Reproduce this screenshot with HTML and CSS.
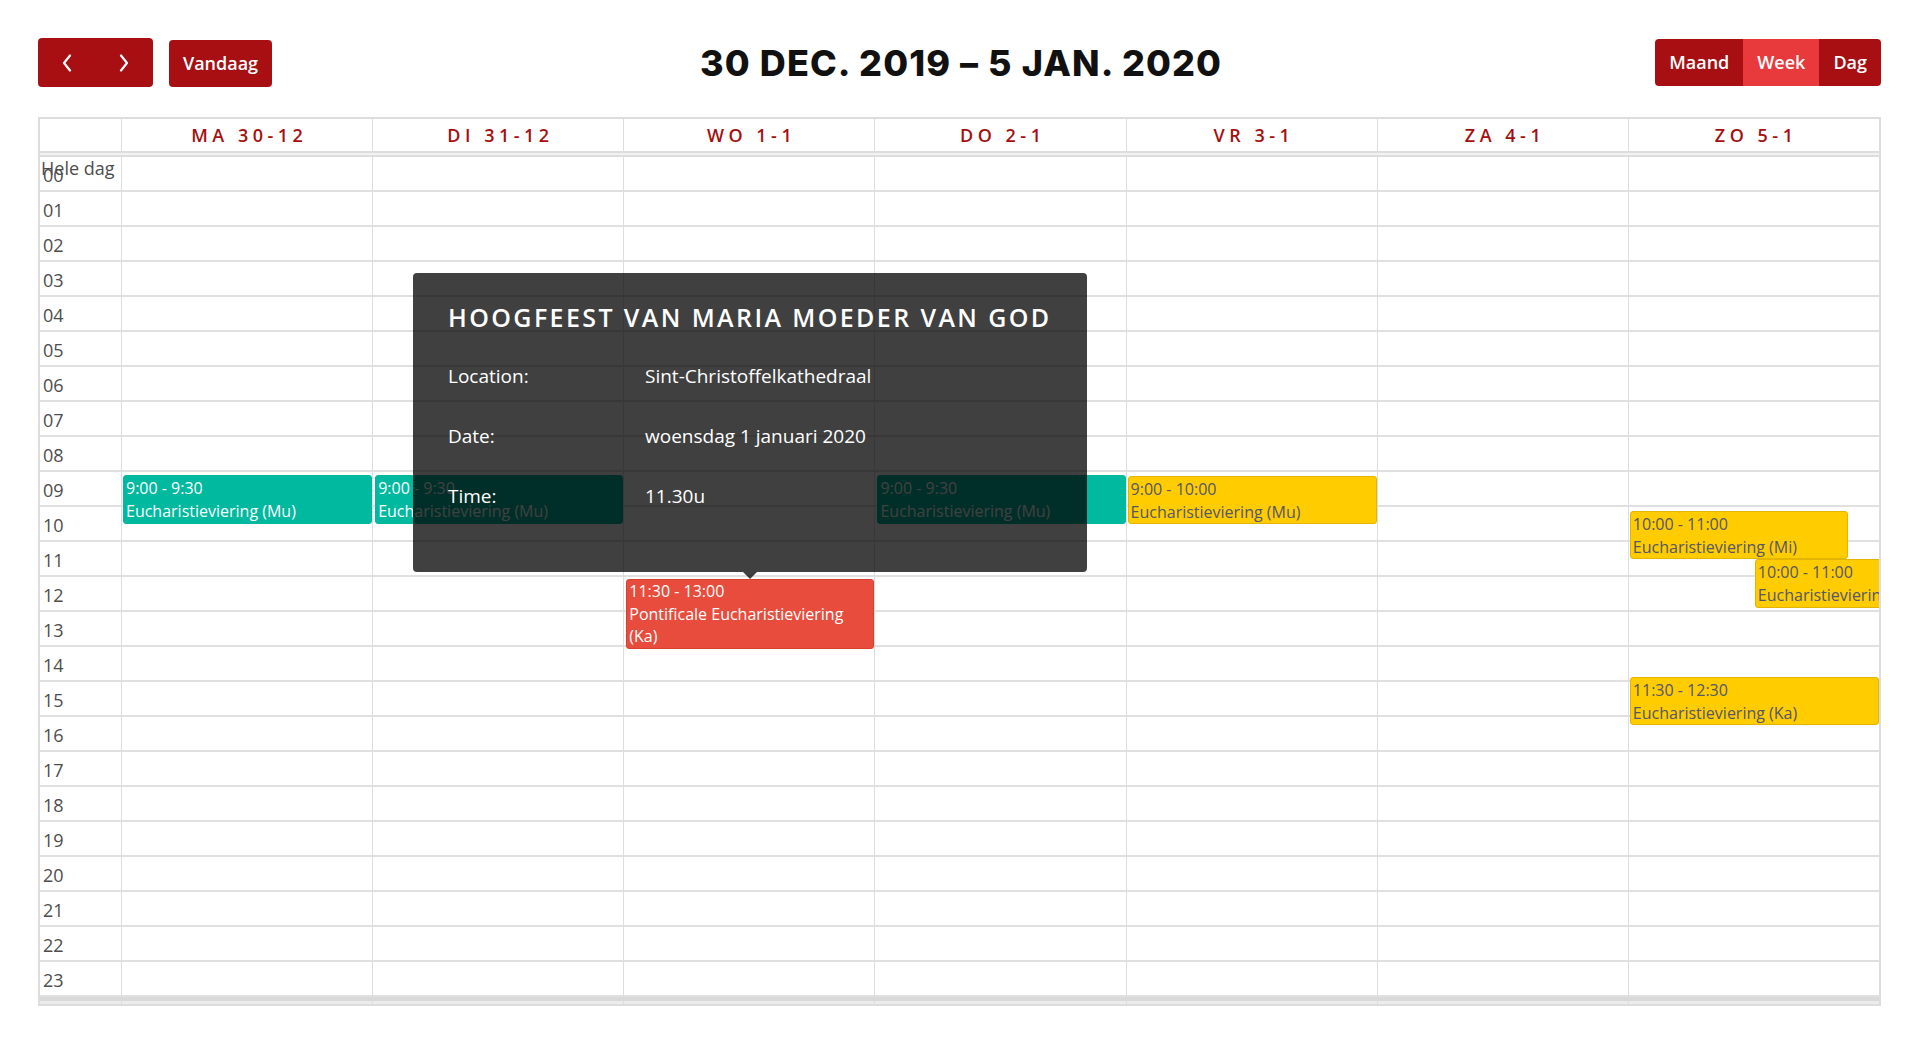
FILE: index.html
```html
<!DOCTYPE html>
<html lang="nl">
<head>
<meta charset="utf-8">
<title>Kalender</title>
<link rel="stylesheet" href="styles.css">
</head>
<body>
<div class="page">
  <header class="toolbar">
    <div class="tb-left">
      <div class="btn-group nav">
        <button class="btn icon-btn" aria-label="Vorige"><svg width="12" height="18" viewBox="0 0 12 18"><polyline points="9,1.5 3,9 9,16.5" fill="none" stroke="#fff" stroke-width="2.2" stroke-linecap="round" stroke-linejoin="round"/></svg></button>
        <button class="btn icon-btn" aria-label="Volgende"><svg width="12" height="18" viewBox="0 0 12 18"><polyline points="3,1.5 9,9 3,16.5" fill="none" stroke="#fff" stroke-width="2.2" stroke-linecap="round" stroke-linejoin="round"/></svg></button>
      </div>
      <button class="btn today">Vandaag</button>
    </div>
    <h2 class="title">30 DEC. 2019 – 5 JAN. 2020</h2>
    <div class="btn-group views">
      <button class="btn">Maand</button><button class="btn active">Week</button><button class="btn">Dag</button>
    </div>
  </header>

  <div class="calendar">
    <div class="cal-head">
      <div class="head-cell corner"></div>
      <div class="head-cell">MA 30-12</div>
      <div class="head-cell">DI 31-12</div>
      <div class="head-cell">WO 1-1</div>
      <div class="head-cell">DO 2-1</div>
      <div class="head-cell">VR 3-1</div>
      <div class="head-cell">ZA 4-1</div>
      <div class="head-cell">ZO 5-1</div>
    </div>
    <div class="cal-divider"></div>
    <div class="cal-body">
      <div class="allday-label">Hele dag</div>
      <div class="time-col">
        <div class="slot">00</div><div class="slot">01</div><div class="slot">02</div><div class="slot">03</div>
        <div class="slot">04</div><div class="slot">05</div><div class="slot">06</div><div class="slot">07</div>
        <div class="slot">08</div><div class="slot">09</div><div class="slot">10</div><div class="slot">11</div>
        <div class="slot">12</div><div class="slot">13</div><div class="slot">14</div><div class="slot">15</div>
        <div class="slot">16</div><div class="slot">17</div><div class="slot">18</div><div class="slot">19</div>
        <div class="slot">20</div><div class="slot">21</div><div class="slot">22</div><div class="slot">23</div>
      </div>
      <div class="day-col">
        <div class="slots"><div class="slot"></div><div class="slot"></div><div class="slot"></div><div class="slot"></div><div class="slot"></div><div class="slot"></div><div class="slot"></div><div class="slot"></div><div class="slot"></div><div class="slot"></div><div class="slot"></div><div class="slot"></div><div class="slot"></div><div class="slot"></div><div class="slot"></div><div class="slot"></div><div class="slot"></div><div class="slot"></div><div class="slot"></div><div class="slot"></div><div class="slot"></div><div class="slot"></div><div class="slot"></div><div class="slot"></div></div>
        <div class="event teal ev-full-l1" style="top:318px;height:49px"><div>9:00 - 9:30</div><div>Eucharistieviering (Mu)</div></div>
      </div>
      <div class="day-col">
        <div class="slots"><div class="slot"></div><div class="slot"></div><div class="slot"></div><div class="slot"></div><div class="slot"></div><div class="slot"></div><div class="slot"></div><div class="slot"></div><div class="slot"></div><div class="slot"></div><div class="slot"></div><div class="slot"></div><div class="slot"></div><div class="slot"></div><div class="slot"></div><div class="slot"></div><div class="slot"></div><div class="slot"></div><div class="slot"></div><div class="slot"></div><div class="slot"></div><div class="slot"></div><div class="slot"></div><div class="slot"></div></div>
        <div class="event teal ev-full" style="top:318px;height:49px"><div>9:00 - 9:30</div><div>Eucharistieviering (Mu)</div></div>
      </div>
      <div class="day-col">
        <div class="slots"><div class="slot"></div><div class="slot"></div><div class="slot"></div><div class="slot"></div><div class="slot"></div><div class="slot"></div><div class="slot"></div><div class="slot"></div><div class="slot"></div><div class="slot"></div><div class="slot"></div><div class="slot"></div><div class="slot"></div><div class="slot"></div><div class="slot"></div><div class="slot"></div><div class="slot"></div><div class="slot"></div><div class="slot"></div><div class="slot"></div><div class="slot"></div><div class="slot"></div><div class="slot"></div><div class="slot"></div></div>
        <div class="event red ev-full" style="top:422px;height:70px"><div>11:30 - 13:00</div><div>Pontificale Eucharistieviering (Ka)</div></div>
      </div>
      <div class="day-col">
        <div class="slots"><div class="slot"></div><div class="slot"></div><div class="slot"></div><div class="slot"></div><div class="slot"></div><div class="slot"></div><div class="slot"></div><div class="slot"></div><div class="slot"></div><div class="slot"></div><div class="slot"></div><div class="slot"></div><div class="slot"></div><div class="slot"></div><div class="slot"></div><div class="slot"></div><div class="slot"></div><div class="slot"></div><div class="slot"></div><div class="slot"></div><div class="slot"></div><div class="slot"></div><div class="slot"></div><div class="slot"></div></div>
        <div class="event teal ev-full" style="top:318px;height:49px"><div>9:00 - 9:30</div><div>Eucharistieviering (Mu)</div></div>
      </div>
      <div class="day-col">
        <div class="slots"><div class="slot"></div><div class="slot"></div><div class="slot"></div><div class="slot"></div><div class="slot"></div><div class="slot"></div><div class="slot"></div><div class="slot"></div><div class="slot"></div><div class="slot"></div><div class="slot"></div><div class="slot"></div><div class="slot"></div><div class="slot"></div><div class="slot"></div><div class="slot"></div><div class="slot"></div><div class="slot"></div><div class="slot"></div><div class="slot"></div><div class="slot"></div><div class="slot"></div><div class="slot"></div><div class="slot"></div></div>
        <div class="event yellow ev-full-l1" style="top:319px;height:48px"><div>9:00 - 10:00</div><div>Eucharistieviering (Mu)</div></div>
      </div>
      <div class="day-col">
        <div class="slots"><div class="slot"></div><div class="slot"></div><div class="slot"></div><div class="slot"></div><div class="slot"></div><div class="slot"></div><div class="slot"></div><div class="slot"></div><div class="slot"></div><div class="slot"></div><div class="slot"></div><div class="slot"></div><div class="slot"></div><div class="slot"></div><div class="slot"></div><div class="slot"></div><div class="slot"></div><div class="slot"></div><div class="slot"></div><div class="slot"></div><div class="slot"></div><div class="slot"></div><div class="slot"></div><div class="slot"></div></div>
      </div>
      <div class="day-col">
        <div class="slots"><div class="slot"></div><div class="slot"></div><div class="slot"></div><div class="slot"></div><div class="slot"></div><div class="slot"></div><div class="slot"></div><div class="slot"></div><div class="slot"></div><div class="slot"></div><div class="slot"></div><div class="slot"></div><div class="slot"></div><div class="slot"></div><div class="slot"></div><div class="slot"></div><div class="slot"></div><div class="slot"></div><div class="slot"></div><div class="slot"></div><div class="slot"></div><div class="slot"></div><div class="slot"></div><div class="slot"></div></div>
        <div class="event yellow ev-first" style="top:354px;height:48px"><div>10:00 - 11:00</div><div>Eucharistieviering (Mi)</div></div>
        <div class="event yellow ev-second" style="top:402px;height:49px"><div>10:00 - 11:00</div><div>Eucharistieviering (Mu)</div></div>
        <div class="event yellow ev-full-l1" style="top:520px;height:48px"><div>11:30 - 12:30</div><div>Eucharistieviering (Ka)</div></div>
      </div>
    </div>
    <div class="cal-foot">
      <div class="foot-cell"></div><div class="foot-cell"></div><div class="foot-cell"></div><div class="foot-cell"></div><div class="foot-cell"></div><div class="foot-cell"></div><div class="foot-cell"></div><div class="foot-cell"></div>
    </div>
  </div>

  <div class="tooltip">
    <h3 class="tip-title">HOOGFEEST VAN MARIA MOEDER VAN GOD</h3>
    <div class="tip-rows">
      <div class="tip-row"><span>Location:</span><span>Sint-Christoffelkathedraal</span></div>
      <div class="tip-row"><span>Date:</span><span>woensdag 1 januari 2020</span></div>
      <div class="tip-row"><span>Time:</span><span>11.30u</span></div>
    </div>
  </div>
</div>
</body>
</html>
```

FILE: styles.css
```css
* { box-sizing: border-box; }

body {
  margin: 0;
  background: #fff;
  color: #333;
  font-family: "Open Sans", "Liberation Sans", sans-serif;
}

.page {
  position: relative;
  padding: 38px 39px 0 38px;
}

/* ---------- toolbar ---------- */
.toolbar {
  display: flex;
  align-items: center;
  height: 49px;
  margin-bottom: 30px;
}

.tb-left {
  display: flex;
  align-items: center;
  gap: 16px;
}

.btn {
  border: 0;
  margin: 0;
  height: 47px;
  padding: 0 14px;
  border-radius: 4px;
  background: #a70f12;
  color: #fff;
  font-family: "Open Sans", "Liberation Sans", sans-serif;
  font-size: 18px;
  font-weight: 600;
  line-height: 47px;
  cursor: pointer;
}

.btn-group {
  display: flex;
  border-radius: 4px;
  overflow: hidden;
}

.btn-group .btn { border-radius: 0; }

.nav .icon-btn {
  width: 57.5px;
  height: 49px;
  padding: 0;
  display: flex;
  align-items: center;
  justify-content: center;
}

.today {
  width: 103px;
  padding: 0;
  margin-top: 2px;
}

.views .btn.active { background: #e8393d; }

.title {
  flex: 1;
  margin: 0;
  padding-right: 5px;
  text-align: center;
  font-family: "Inter", "Lato", sans-serif;
  font-weight: 800;
  font-size: 36px;
  letter-spacing: 1.1px;
  color: #111;
}

/* ---------- calendar ---------- */
.calendar {
  border: 2px solid #dddddd;
}

.cal-head,
.cal-body,
.cal-foot {
  display: grid;
  grid-template-columns: 81px repeat(7, 1fr);
}

.cal-head {
  height: 34px;
  border-bottom: 2px solid #dddddd;
}

.head-cell {
  border-left: 1px solid #dddddd;
  text-align: center;
  font-size: 18px;
  font-weight: 600;
  line-height: 32px;
  letter-spacing: 4.5px;
  text-indent: 4.5px;
  color: #a50f0f;
}

.head-cell.corner { border-left: 0; }

.cal-divider {
  height: 4px;
  background: #f1f1f1;
  border-bottom: 2px solid #dddddd;
}

.cal-body { position: relative; }

.slot {
  height: 35px;
  border-bottom: 2px solid #e0e0e0;
}

.time-col .slot {
  padding: 4px 0 0 3px;
  font-size: 18px;
  line-height: 29px;
  color: #4d4d4d;
}

.allday-label {
  position: absolute;
  left: 1px;
  top: 1px;
  font-size: 18px;
  line-height: 20px;
  color: #4d4d4d;
  z-index: 1;
}

.day-col {
  position: relative;
  border-left: 1px solid #dddddd;
  overflow: hidden;
}

.cal-foot {
  height: 7px;
  border-top: 4px solid #d9d9d9;
  background: #ececec;
}

.foot-cell + .foot-cell { border-left: 1px solid #dddddd; }

/* ---------- events ---------- */
.event {
  position: absolute;
  padding: 1px 2px 0;
  border-radius: 3px;
  border: 1px solid transparent;
  font-size: 16px;
  line-height: 22.5px;
  overflow: hidden;
}

.event.teal {
  background: #00b99e;
  border-color: #00b99e;
  color: #fff;
}

.event.red {
  background: #e74c3c;
  border-color: #d9412f;
  color: #fff;
  padding-top: 0;
}

.event.yellow {
  background: #ffcc00;
  border-color: #e3b400;
  color: #55566a;
}

.ev-full { left: 2px; right: 0; }
.ev-full-l1 { left: 1px; right: 0; }
.ev-first { left: 1px; right: 31px; }
.ev-second { left: 126px; width: 218px; }

/* ---------- tooltip ---------- */
.tooltip {
  position: absolute;
  left: 413px;
  top: 273px;
  width: 674px;
  height: 299px;
  padding: 26px 0 0 35px;
  border-radius: 4px;
  background: rgba(0, 0, 0, 0.75);
  color: #fff;
  z-index: 5;
}

.tooltip::after {
  content: "";
  position: absolute;
  left: 50%;
  bottom: -7px;
  margin-left: -7px;
  border-left: 7px solid transparent;
  border-right: 7px solid transparent;
  border-top: 7px solid rgba(0, 0, 0, 0.75);
}

.tip-title {
  margin: 0;
  font-size: 25px;
  font-weight: 600;
  line-height: 36px;
  letter-spacing: 2.4px;
  white-space: nowrap;
}

.tip-rows { margin-top: 11px; }

.tip-row {
  display: grid;
  grid-template-columns: 197px 1fr;
  align-items: center;
  height: 60px;
  font-size: 19px;
  line-height: 26px;
}
```
